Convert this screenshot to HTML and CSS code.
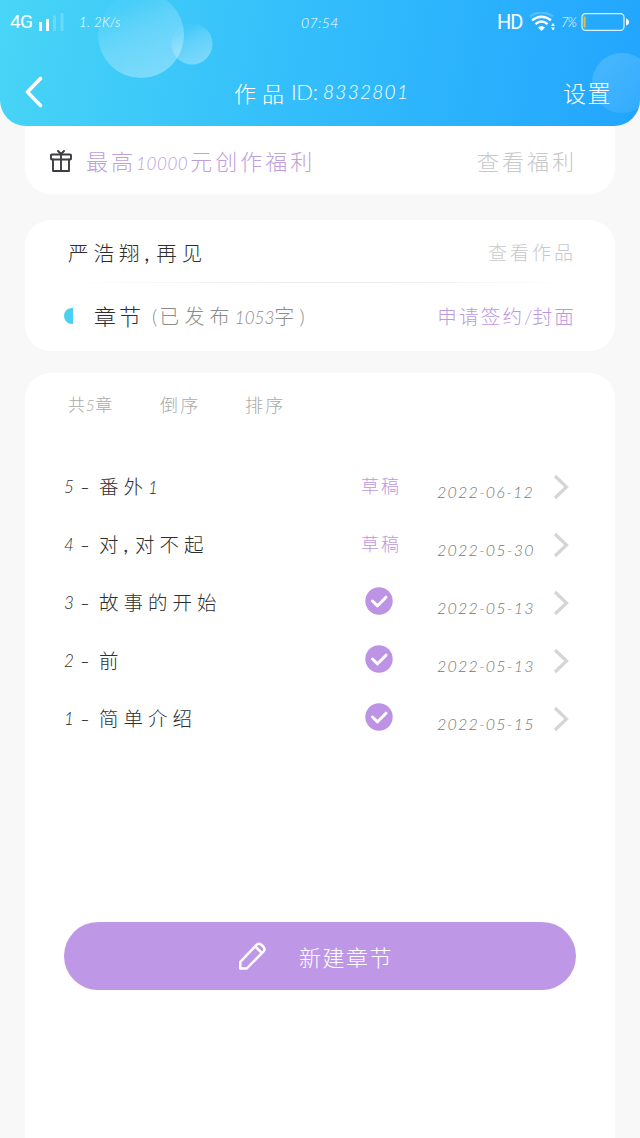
FILE: index.html
```html
<!DOCTYPE html>
<html lang="zh-CN">
<head>
<meta charset="utf-8">
<title>作品</title>
<link rel="stylesheet" href="styles.css">
</head>
<body>
<header class="header">
  <svg class="bubbles" width="640" height="126" viewBox="0 0 640 126" aria-hidden="true">
    <defs>
      <linearGradient id="g1" x1="0.2" y1="0.2" x2="0.6" y2="1"><stop offset="0" stop-color="#fff" stop-opacity=".04"/><stop offset=".4" stop-color="#fff" stop-opacity=".2"/><stop offset="1" stop-color="#fff" stop-opacity=".33"/></linearGradient>
      <linearGradient id="g2" x1="0" y1="0" x2="0.7" y2="1"><stop offset="0" stop-color="#fff" stop-opacity=".17"/><stop offset="1" stop-color="#fff" stop-opacity=".08"/></linearGradient>
    </defs>
    <circle cx="192" cy="44" r="20.500" fill="url(#g1)"/>
    <circle cx="141" cy="35" r="43" fill="url(#g1)"/>
    <circle cx="622" cy="83" r="30" fill="url(#g2)"/>
  </svg>
  <div class="status">
    <span class="net">4G</span>
    <svg class="signal" width="26" height="20" viewBox="0 0 26 20"><path fill="#fff" d="M0 10h3v9H0zM7 7h3v12H7z"/><path fill="#fff" fill-opacity=".2" d="M14 3.500h3V19h-3zM21.500 1h3v18h-3z"/></svg>
    <span class="speed">1. 2K/s</span>
    <span class="clock">07:54</span>
    <span class="hd">HD</span>
    <svg class="wifi" width="26" height="20" viewBox="0 0 26 20"><g fill="none" stroke="#fff" stroke-width="2.400"><path stroke-opacity=".2" d="M1 4.500Q12 -3.500 24 4.500"/><path d="M3 8.300Q12.500 1 22 8.300"/><path d="M6.500 12.200Q12.500 7 18.500 12.200"/></g><path fill="#fff" d="M9 15.500Q12.500 12.300 16 15.500L12.500 19zM22 14l2-3 2 3zM22 15.500l2 3 2-3z"/></svg>
    <span class="percent">7%</span>
    <svg class="battery" width="49" height="20" viewBox="0 0 49 20"><rect x="1" y="1.700" width="42" height="16.600" rx="3.500" fill="none" stroke="#d5f3fa" stroke-width="1.300"/><path fill="#e0bd45" d="M2.600 4.500h2v11h-2z"/><path fill="#fff" d="M45 6.500q3 1 3 3.500t-3 3.500z"/></svg>
  </div>
  <nav class="nav">
    <svg class="back" width="18" height="32" viewBox="0 0 18 32"><path d="M15.500 2.500L2.500 16l13 13.500" fill="none" stroke="#fff" stroke-width="3.600" stroke-linecap="round" stroke-linejoin="round"/></svg>
    <h1 class="title"><span class="title-cn">作品</span><span class="title-id">ID:</span><span class="title-num">8332801</span></h1>
    <span class="settings">设置</span>
  </nav>
</header>
<main class="main">
  <section class="card welfare">
    <svg class="gift" width="22" height="22" viewBox="0 0 22 22" fill="none" stroke="#3c3c42" stroke-width="1.900" stroke-linejoin="round" stroke-linecap="round"><rect x="1" y="4.500" width="20" height="5" rx=".8"/><path d="M3 9.500V21h16V9.500M11 4.500V21M8 1l3 3 3-3"/></svg>
    <span class="welfare-text">最高<span class="n">10000</span>元创作福利</span>
    <span class="welfare-link">查看福利</span>
  </section>
  <section class="card work">
    <div class="row work-head"><span class="work-name">严浩翔<span class="comma">,</span>再见</span><span class="work-link">查看作品</span></div>
    <div class="line"></div>
    <div class="row work-chapters">
      <span class="half"></span>
      <span class="label">章节</span>
      <span class="count"><span class="paren">(</span>已发布<span class="n">1053</span>字<span class="paren">)</span></span>
      <span class="apply">申请签约<span class="slash">/</span>封面</span>
    </div>
  </section>
  <section class="card chapters">
    <div class="tools"><span class="total">共<span class="n">5</span>章</span><span class="reverse">倒序</span><span>排序</span></div>
    <ul class="list">
      <li class="item"><span class="no">5</span><span class="dash">-</span><span class="name">番外<span class="n">1</span></span><span class="state">草稿</span><span class="date">2022-06-12</span><svg class="arrow" width="16" height="26" viewBox="0 0 16 26"><path d="M2 2l11.500 11L2 24"/></svg></li>
      <li class="item"><span class="no">4</span><span class="dash">-</span><span class="name">对<span class="comma">,</span>对不起</span><span class="state">草稿</span><span class="date">2022-05-30</span><svg class="arrow" width="16" height="26" viewBox="0 0 16 26"><path d="M2 2l11.500 11L2 24"/></svg></li>
      <li class="item"><span class="no">3</span><span class="dash">-</span><span class="name">故事的开始</span><span class="state"><svg class="check" width="28" height="28" viewBox="0 0 28 28"><circle cx="14" cy="14" r="13.700"/><path d="M7.500 14l5 4.800 8.500-8.600"/></svg></span><span class="date">2022-05-13</span><svg class="arrow" width="16" height="26" viewBox="0 0 16 26"><path d="M2 2l11.500 11L2 24"/></svg></li>
      <li class="item"><span class="no">2</span><span class="dash">-</span><span class="name">前</span><span class="state"><svg class="check" width="28" height="28" viewBox="0 0 28 28"><circle cx="14" cy="14" r="13.700"/><path d="M7.500 14l5 4.800 8.500-8.600"/></svg></span><span class="date">2022-05-13</span><svg class="arrow" width="16" height="26" viewBox="0 0 16 26"><path d="M2 2l11.500 11L2 24"/></svg></li>
      <li class="item"><span class="no">1</span><span class="dash">-</span><span class="name">简单介绍</span><span class="state"><svg class="check" width="28" height="28" viewBox="0 0 28 28"><circle cx="14" cy="14" r="13.700"/><path d="M7.500 14l5 4.800 8.500-8.600"/></svg></span><span class="date">2022-05-15</span><svg class="arrow" width="16" height="26" viewBox="0 0 16 26"><path d="M2 2l11.500 11L2 24"/></svg></li>
    </ul>
    <button class="create">
      <svg width="30" height="30" viewBox="0 0 30 30" fill="none" stroke="#fff" stroke-width="2.500" stroke-linejoin="round"><path d="M3.300 27.500V20.800L19.800 3.700Q22 1.700 24.200 3.700L26.600 6Q28.500 8.200 26.600 10.300L9.800 27.500zM18.300 5.500l6.400 6.400"/></svg>
      <span class="create-text">新建章节</span>
    </button>
  </section>
</main>
</body>
</html>
```
FILE: styles.css
```css
* { box-sizing: border-box; }
body {
  margin: 0;
  width: 640px;
  height: 1138px;
  overflow: hidden;
  display: flex;
  flex-direction: column;
  background: #f8f8f8;
  font-family: Lato, "Noto Sans CJK SC", sans-serif;
  font-weight: 300;
  color: #2e2e2e;
  white-space: nowrap;
}
svg { display: block; flex: none; }

.header {
  position: relative;
  height: 126px;
  flex: none;
  overflow: hidden;
  border-radius: 0 0 26px 26px;
  background: linear-gradient(100deg, #48d5f6 0%, #34bffb 45%, #22a5fe 100%);
  color: #fff;
}
.bubbles { position: absolute; left: 0; top: 0; }
.status { position: relative; display: flex; align-items: center; height: 44px; padding-left: 10px; }
.net { width: 29px; font: 400 19px/20px Roboto, sans-serif; letter-spacing: -0.8px; }
.speed { width: 60px; margin-left: 14px; font-size: 13px; font-style: italic; letter-spacing: 0.4px; }
.clock { width: 40px; margin-left: 162px; font-size: 14px; font-style: italic; letter-spacing: 0.4px; }
.hd { width: 29px; margin-left: 156px; font: 400 20px/20px Roboto, sans-serif; letter-spacing: -1px; }
.wifi { margin-left: 3px; }
.percent { width: 17px; margin-left: 6px; font-size: 13px; font-style: italic; letter-spacing: -1px; }
.battery { margin-left: 3px; }

.nav { position: relative; display: flex; align-items: center; height: 68px; margin-top: 14px; padding: 0 28px 0 25px; }
.title { display: flex; align-items: center; width: 180px; margin: 0 0 0 191px; font-size: 22px; line-height: 30px; font-weight: 300; }
.title-cn { width: 57px; letter-spacing: 6px; padding-top: 3px; }
.title-id { width: 32px; letter-spacing: -0.4px; }
.title-num { font-size: 19px; font-style: italic; letter-spacing: 1.300px; }
.settings { margin: 0 0 0 auto; font-size: 23px; letter-spacing: 1.500px; }

.main { flex: 1; min-height: 0; display: flex; flex-direction: column; padding: 0 25px; }
.card { background: #fff; border-radius: 26px; }

.welfare { display: flex; align-items: center; height: 68px; flex: none; padding: 0 38px 0 25px; border-radius: 0 0 26px 26px; }
.gift { margin-top: 2px; }
.n { font-style: italic; }
.welfare-text { margin-left: 14px; font-size: 22px; letter-spacing: 3px; color: #bda0dc; }
.welfare-text .n { font-size: 17px; letter-spacing: 0.600px; margin-right: 2px; }
.welfare-link { margin-left: auto; font-size: 22px; letter-spacing: 3px; color: #c8c8c8; }

.work { height: 131px; flex: none; margin-top: 26px; padding: 0 39px; }
.row { display: flex; align-items: center; }
.work-head { height: 62px; padding: 1px 0 0 4px; }
.work-name { font-size: 20.500px; letter-spacing: 5px; }
.comma { letter-spacing: 7px; font-weight: 400; }
.work-link { margin-left: auto; font-size: 19px; letter-spacing: 3px; color: #c8c8c8; }
.line { height: 1px; background: linear-gradient(90deg, #fff, #ececec 45%, #ececec 60%, #fff); }
.work-chapters { height: 66px; }
.half { width: 9px; height: 16px; border-radius: 9px 0 0 9px; background: #4ad0f0; }
.label, .count, .apply { margin-top: -2px; }
.label { margin-left: 21px; font-size: 22px; letter-spacing: 3px; }
.count { margin-left: 8px; font-size: 20px; letter-spacing: 5.200px; color: #8c8c8c; }
.count .n { font-size: 17px; letter-spacing: 0; }
.paren { letter-spacing: 2px; }
.apply { margin-left: auto; font-size: 19.500px; letter-spacing: 2.200px; color: #bb98df; }
.slash { letter-spacing: 0; }

.chapters { flex: 1; min-height: 0; margin-top: 22px; padding: 0 39px; border-radius: 26px 26px 0 0; }
.tools { display: flex; align-items: center; height: 61px; padding-left: 4px; font-size: 18px; letter-spacing: 2.200px; color: #aaa; }
.total { width: 92px; font-size: 17px; letter-spacing: 0.500px; }
.total .n { font-size: 16px; }
.reverse { width: 85px; }
.list { list-style: none; margin: 23px 0 0; padding: 0; }
.item { display: flex; align-items: center; height: 58px; }
.no { width: 16px; font-size: 17px; font-style: italic; }
.dash { width: 19px; font-size: 22px; transform: scaleX(1.200); transform-origin: left; }
.name { width: 261px; margin-top: -2px; font-size: 19.500px; letter-spacing: 5px; }
.name .n { font-size: 17px; }
.state { display: flex; width: 77px; margin-top: -2px; padding-left: 1px; font-size: 18px; letter-spacing: 2px; color: #bb98df; }
.state .check { margin-left: 4px; margin-top: -1px; }
.check circle { fill: #bd93e6; }
.check path { fill: none; stroke: #fff; stroke-width: 3px; stroke-linecap: round; stroke-linejoin: round; }
.date { width: 116px; padding-top: 10px; font-size: 16px; font-style: italic; letter-spacing: 1.200px; color: #777; }
.arrow { margin-top: 1px; }
.arrow path { fill: none; stroke: #d5d5d5; stroke-width: 3.200px; }

.create { display: flex; align-items: center; width: 512px; height: 68px; margin-top: 175px; padding: 0 0 0 173px; border: 0; border-radius: 34px; background: #be97e7; color: #fff; font: inherit; }
.create-text { margin-left: 32px; font-size: 22px; letter-spacing: 1.500px; }
```
